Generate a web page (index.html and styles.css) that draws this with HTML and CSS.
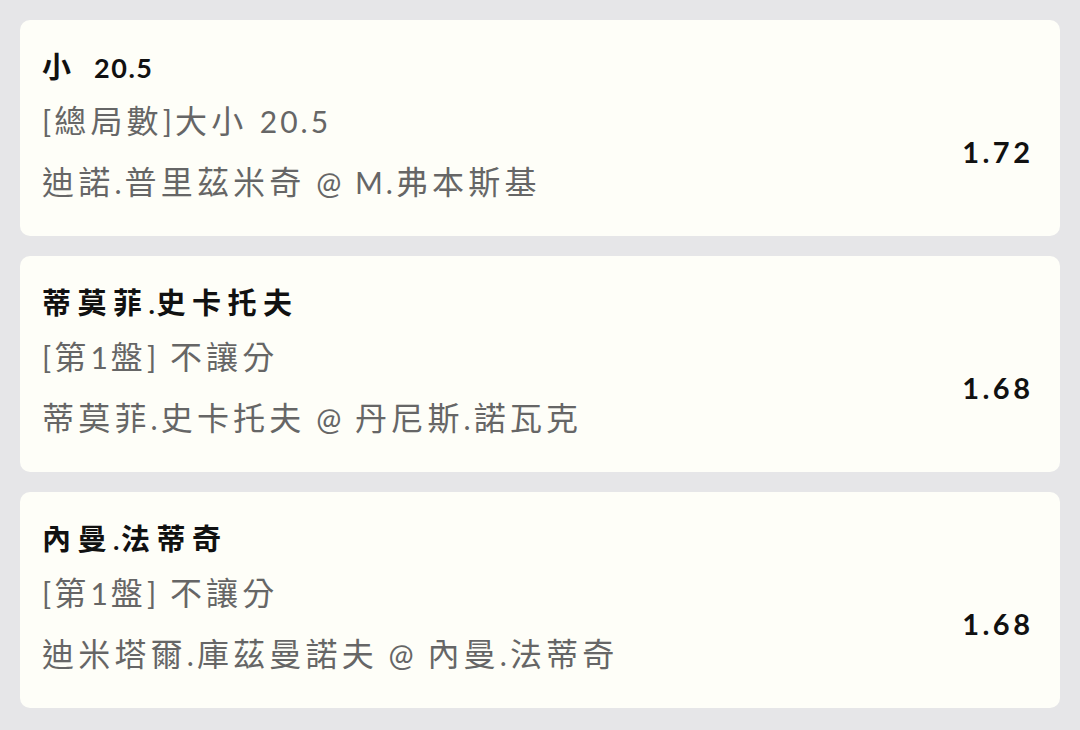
FILE: index.html
```html
<!DOCTYPE html>
<html lang="zh-Hant">
<head>
    <meta charset="UTF-8">
    <meta name="viewport" content="width=device-width, initial-scale=1.0">
    <title>Bet Slip</title>
    <link rel="stylesheet" href="styles.css">
</head>
<body>
    <div class="slip">
        <div class="bet-card">
            <div class="pick">小 <span class="lat">20.5</span></div>
            <div class="market"><span class="lat">[</span>總局數<span class="lat">]</span>大小 <span class="lat">20.5</span></div>
            <div class="match">迪諾<span class="lat">.</span>普里茲米奇<span class="lat"> @ M.</span>弗本斯基</div>
            <div class="odds">1.72</div>
        </div>
        <div class="bet-card">
            <div class="pick">蒂莫菲<span class="lat">.</span>史卡托夫</div>
            <div class="market"><span class="lat">[</span>第<span class="lat">1</span>盤<span class="lat">] </span>不讓分</div>
            <div class="match">蒂莫菲<span class="lat">.</span>史卡托夫<span class="lat"> @ </span>丹尼斯<span class="lat">.</span>諾瓦克</div>
            <div class="odds">1.68</div>
        </div>
        <div class="bet-card">
            <div class="pick">內曼<span class="lat">.</span>法蒂奇</div>
            <div class="market"><span class="lat">[</span>第<span class="lat">1</span>盤<span class="lat">] </span>不讓分</div>
            <div class="match">迪米塔爾<span class="lat">.</span>庫茲曼諾夫<span class="lat"> @ </span>內曼<span class="lat">.</span>法蒂奇</div>
            <div class="odds">1.68</div>
        </div>
    </div>
</body>
</html>
```

FILE: styles.css
```css
/* Page */
body {
    margin: 0;
    background: #e6e6e8;
    font-family: Lato, "Noto Sans CJK TC", sans-serif;
}

.slip {
    display: flex;
    flex-direction: column;
    gap: 20px;
    padding: 20px;
}

/* Bet card */
.bet-card {
    display: grid;
    grid-template-columns: 1fr auto;
    background: #fefef8;
    border-radius: 10px;
    padding: 27px 30px 24px 22px;
}

.pick, .market, .match {
    grid-column: 1;
}

.lat {
    line-height: 1;
}

.pick {
    height: 40px;
    font-size: 29px;
    font-weight: 700;
    line-height: 40px;
    letter-spacing: 6.5px;
    word-spacing: 3px;
    color: #111;
}

.pick .lat {
    font-size: 27px;
    letter-spacing: 1.5px;
}

.market, .match {
    height: 60px;
    font-size: 32px;
    line-height: 60px;
    letter-spacing: 4.2px;
    color: #666;
}

.market {
    margin-top: 4px;
}

.match {
    height: 61px;
    line-height: 61px;
}

.market .lat, .match .lat {
    font-size: 30px;
    letter-spacing: 3px;
}

.odds {
    grid-column: 2;
    grid-row: 2 / span 2;
    align-self: center;
    margin-top: 3px;
    margin-right: -3.5px;
    font-size: 29px;
    font-weight: 700;
    letter-spacing: 3.5px;
    color: #111;
}
```
